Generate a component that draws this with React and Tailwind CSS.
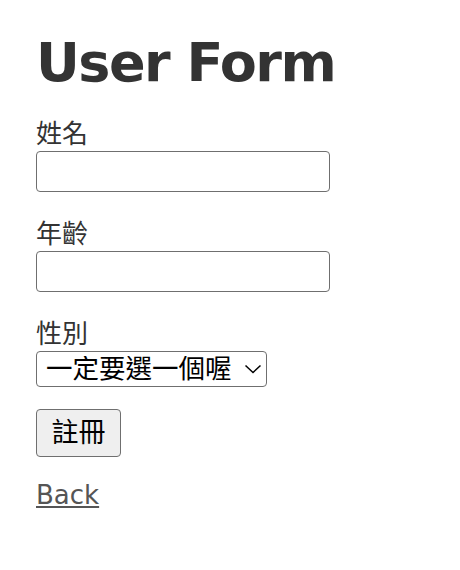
import React, { useState } from "react";

const cjk = "font-['DejaVu_Sans','Noto_Sans_CJK_TC',sans-serif]";

export default function App() {
  const [name, setName] = useState("");
  const [age, setAge] = useState("");
  const [gender, setGender] = useState("");

  return (
    <div className={`min-h-[570px] bg-white px-9 pt-[31px] text-[#333] ${cjk}`}>
      <h1 className="text-[54px] font-bold leading-[64px] tracking-[-1.5px]">User Form</h1>

      <form className="mt-[22px] flex flex-col" onSubmit={(e) => e.preventDefault()}>
        <label className="text-[26px] leading-[34px]">姓名</label>
        <input
          value={name}
          onChange={(e) => setName(e.target.value)}
          className="h-[41px] w-[294px] rounded-[4px] border border-[#6f6f6f] bg-white px-2 text-[20px]"
        />

        <label className="mt-[25px] text-[26px] leading-[34px]">年齡</label>
        <input
          value={age}
          onChange={(e) => setAge(e.target.value)}
          className="h-[41px] w-[294px] rounded-[4px] border border-[#6f6f6f] bg-white px-2 text-[20px]"
        />

        <label className="mt-[25px] text-[26px] leading-[34px]">性別</label>
        <div className="relative h-[36px] w-[231px]">
          <select
            value={gender}
            onChange={(e) => setGender(e.target.value)}
            className="h-full w-full appearance-none rounded-[4px] border border-[#6f6f6f] bg-white pl-[9px] text-[26.5px] leading-none text-black"
          >
            <option value="">一定要選一個喔</option>
            <option value="male">男</option>
            <option value="female">女</option>
          </select>
          <svg
            className="pointer-events-none absolute right-[5px] top-[13px]"
            width="18"
            height="10"
            viewBox="0 0 18 10"
            fill="none"
          >
            <path d="M1.5 1.5 L9 8.5 L16.5 1.5" stroke="#000" strokeWidth="1.5" />
          </svg>
        </div>

        <div className="mt-[22px]">
          <button
            type="submit"
            className="h-[48px] w-[85px] rounded-[4px] border border-[#6f6f6f] bg-[#efefef] text-[27px] text-black"
          >
            註冊
          </button>
        </div>
      </form>

      <a href="#" className="mt-[23px] inline-block text-[26px] leading-[30px] text-[#555] underline">
        Back
      </a>
    </div>
  );
}
